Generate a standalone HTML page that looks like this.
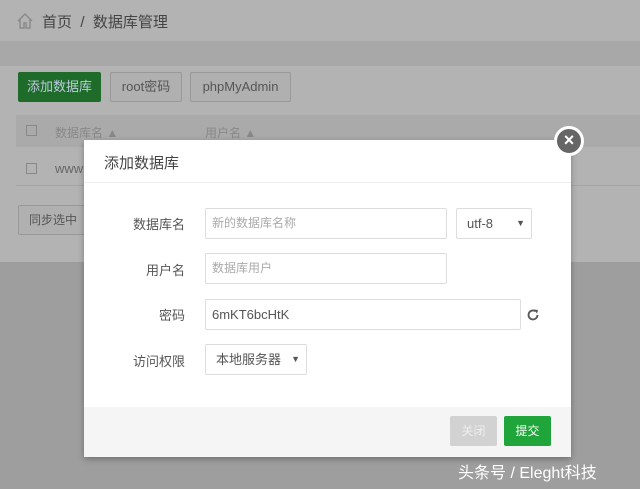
<!DOCTYPE html>
<html><head><meta charset="utf-8"><style>
*{margin:0;padding:0;box-sizing:border-box}
body{width:640px;height:489px;overflow:hidden;background:#9e9e9e;font-family:"Liberation Sans","Noto Sans CJK SC",sans-serif;position:relative;font-size:13px}
.a{position:absolute}
.btn{position:absolute;height:30px;line-height:28px;border:1px solid #999;border-radius:2px;padding:0;text-align:center;color:#555;background:#b0b0b0;font-size:13px;white-space:nowrap}
.inp{position:absolute;height:31px;border:1px solid #ddd;border-radius:2px;background:#fff;line-height:29px;padding-left:6px;font-size:12px;color:#aaa}
.lbl{position:absolute;font-size:13px;color:#555;width:80px;text-align:right;left:105px}
</style></head><body>
<div class="a" style="left:0;top:0;width:640px;height:42px;background:#b3b3b3;border-bottom:1px solid #a9a9a9"></div>
<div class="a" style="left:0;top:42px;width:640px;height:24px;background:#a8a8a8"></div>
<div class="a" style="left:0;top:66px;width:640px;height:196px;background:#b3b3b3"></div>
<svg class="a" style="left:16px;top:12px" width="18" height="18" viewBox="0 0 18 18"><path d="M2 9L9 2l7 7M4 7v9h4v-5h2v5h4V7" fill="none" stroke="#8a8a8a" stroke-width="1.4"/></svg>
<div class="a" style="left:42px;top:11px;font-size:15px;color:#444">首页 &nbsp;/ &nbsp;数据库管理</div>
<div class="btn" style="left:18px;top:72px;background:#1f6b2a;border-color:#1f6b2a;color:#bcd;width:83px">添加数据库</div>
<div class="btn" style="left:110px;top:72px;width:72px">root密码</div>
<div class="btn" style="left:190px;top:72px;width:101px">phpMyAdmin</div>
<div class="a" style="left:16px;top:115px;width:624px;height:32px;background:#aaa"></div>
<div class="a" style="left:26px;top:125px;width:11px;height:11px;border:1px solid #888"></div>
<div class="a" style="left:55px;top:124px;font-size:12px;color:#888">数据库名 ▲</div>
<div class="a" style="left:205px;top:124px;font-size:12px;color:#888">用户名 ▲</div>
<div class="a" style="left:26px;top:163px;width:11px;height:11px;border:1px solid #888"></div>
<div class="a" style="left:55px;top:161px;font-size:13px;color:#666">www</div>
<div class="a" style="left:16px;top:185px;width:624px;height:1px;background:#a5a5a5"></div>
<div class="btn" style="left:18px;top:205px;width:70px;font-size:12px">同步选中</div>

<div class="a" style="left:84px;top:140px;width:487px;height:317px;background:#fff;box-shadow:0 2px 6px rgba(0,0,0,.3)">
 <div class="a" style="left:0;top:0;width:487px;height:43px;border-bottom:1px solid #eee;padding:12px 0 0 20px;font-size:15px;color:#444">添加数据库</div>
 <div class="a" style="left:0;top:267px;width:487px;height:50px;background:#f5f5f5"></div>
 <div class="a" style="left:366px;top:276px;width:47px;height:30px;background:#d2d2d2;border-radius:2px;color:#eee;text-align:center;line-height:30px;font-size:12px">关闭</div>
 <div class="a" style="left:420px;top:276px;width:47px;height:30px;background:#20a53a;border-radius:2px;color:#fff;text-align:center;line-height:30px;font-size:12px">提交</div>
</div>
<div class="lbl" style="top:214px">数据库名</div>
<div class="inp" style="left:205px;top:208px;width:242px">新的数据库名称</div>
<div class="inp" style="left:456px;top:208px;width:76px;color:#555;font-size:13px;padding-left:10px">utf-8<span style="position:absolute;right:6px;font-size:9px">▼</span></div>
<div class="lbl" style="top:260px">用户名</div>
<div class="inp" style="left:205px;top:253px;width:242px">数据库用户</div>
<div class="lbl" style="top:305px">密码</div>
<div class="inp" style="left:205px;top:299px;width:316px;color:#555;font-size:13px">6mKT6bcHtK</div>
<svg class="a" style="left:526px;top:308px" width="14" height="14" viewBox="0 0 14 14"><path d="M11.5 7A4.5 4.5 0 1 1 9.5 3.2" fill="none" stroke="#555" stroke-width="1.8"/><path d="M8 1.5l4 .5-1 3.6z" fill="#555"/></svg>
<div class="lbl" style="top:351px">访问权限</div>
<div class="inp" style="left:205px;top:344px;width:102px;color:#555;font-size:13px;padding-left:10px">本地服务器<span style="position:absolute;right:6px;font-size:9px">▼</span></div>

<div class="a" style="left:554px;top:126px;width:30px;height:30px;border-radius:50%;background:#666;border:3px solid #fff;color:#fff;text-align:center;line-height:22px;font-size:18px;font-weight:bold">×</div>
<div class="a" style="left:458px;top:459px;font-size:16px;color:#fff">头条号 / Eleght科技</div>
</body></html>
